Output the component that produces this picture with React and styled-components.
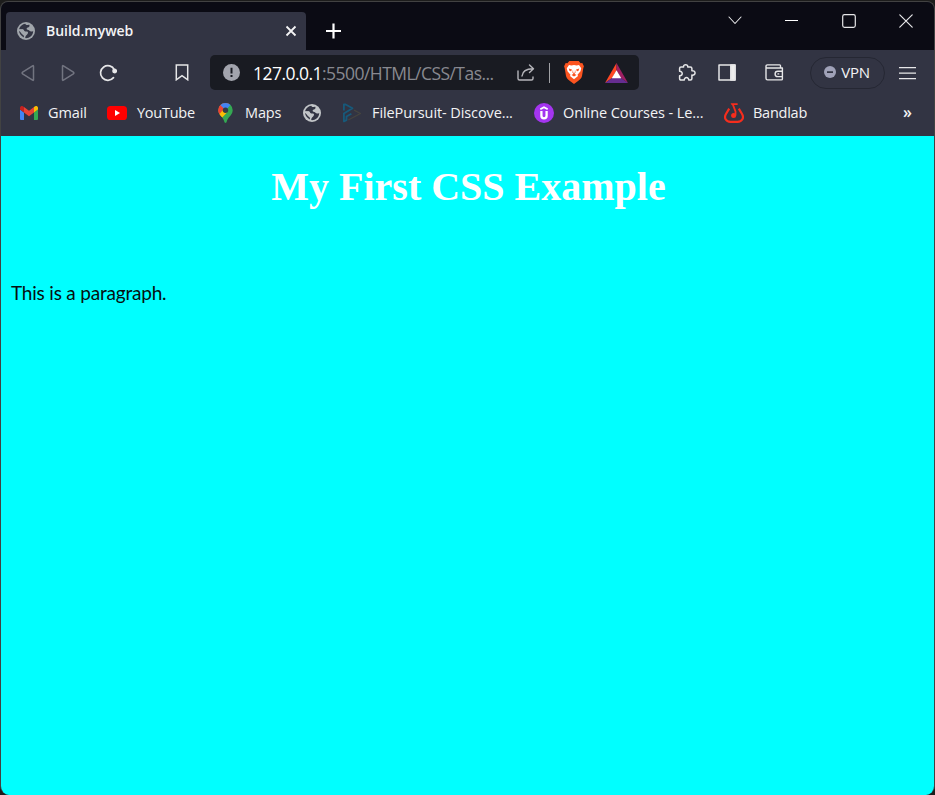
import React from 'react';
import styled, { createGlobalStyle } from 'styled-components';

const GlobalStyle = createGlobalStyle`
  * { box-sizing: border-box; }
  html, body { margin: 0; background: #1b1b1b; overflow: hidden; }
  svg { display: block; flex: none; }
`;

const Desktop = styled.div`
  width: 935px;
  height: 795px;
  padding-top: 1px;
  background: #1d1d1c;
`;

const BrowserWindow = styled.div`
  height: 794px;
  display: flex;
  flex-direction: column;
  overflow: hidden;
  border: 1px solid #424242;
  border-bottom: 0;
  border-radius: 8px 8px 9px 9px;
  background: #323443;
  color: #f3f3f5;
  font-family: "Open Sans", "Noto Sans", sans-serif;
`;

const TabStrip = styled.div`
  height: 48px;
  flex: none;
  display: flex;
  align-items: flex-end;
  padding-left: 5px;
  background: #0b0b14;
`;

const Tab = styled.div`
  width: 300px;
  height: 38px;
  display: flex;
  align-items: center;
  padding: 0 9px 0 11px;
  border-radius: 4px 4px 0 0;
  background: #323443;
`;

const TabTitle = styled.span`
  flex: 1;
  margin-left: 11px;
  font-size: 14px;
  line-height: 20px;
  font-weight: 600;
  letter-spacing: ${(p) => p.$tracking}px;
`;

const NewTab = styled.div`
  width: 54px;
  height: 38px;
  display: grid;
  place-items: center;
`;

const Controls = styled.div`
  height: 48px;
  margin-left: auto;
  padding-bottom: 11px;
  display: grid;
  grid-template-columns: 56px 56px 59px 56px;
  place-items: center;
`;

const Toolbar = styled.div`
  height: 45px;
  flex: none;
  display: grid;
  padding-left: 7px;
  align-items: center;
  grid-template-columns: 40px 40px 40px 26px 56px 429px 28px 40px 40px 54px 6px 80px 41px;
  justify-items: center;
`;

const AddressBar = styled.div`
  width: 429px;
  height: 35px;
  display: grid;
  grid-template-columns: 43px 253px 39px 9px 39px 46px;
  align-items: center;
  justify-items: center;
  border-radius: 5px;
  background: #191b22;
`;

const Address = styled.div`
  justify-self: start;
  font-size: 17.5px;
  line-height: 24px;
  letter-spacing: ${(p) => p.$tracking}px;
  white-space: nowrap;
  color: #888990;
`;

const Host = styled.span`
  color: #ffffff;
`;

const Divider = styled.div`
  width: 1px;
  height: 20px;
  background: #a0a1a5;
`;

const VpnPill = styled.div`
  width: 75px;
  height: 32px;
  display: flex;
  align-items: center;
  justify-content: center;
  gap: 5px;
  border: 1px solid #252733;
  border-radius: 16px;
  font-size: 15px;
  line-height: 20px;
  padding-bottom: 1px;
  letter-spacing: -0.2px;
`;

const Bookmarks = styled.div`
  height: 41px;
  flex: none;
  display: grid;
  align-items: center;
  padding: 0 0 5px 18px;
  grid-template-columns: 88px 108px 87px 40px 192px 190px 172px 40px;
`;

const Bookmark = styled.div`
  display: flex;
  align-items: center;
  gap: ${(p) => p.$gap || 10}px;
`;

const BookmarkIcon = styled.div`
  width: 20px;
  height: 20px;
  display: grid;
  place-items: center;
`;

const Label = styled.span`
  font-size: 14.5px;
  line-height: 20px;
  letter-spacing: ${(p) => p.$tracking ?? -0.13}px;
  white-space: nowrap;
`;

const Overflow = styled.span`
  font-size: 16px;
  line-height: 20px;
  font-weight: 600;
  padding: 0 0 3px 7px;
`;

const Page = styled.main`
  flex: 1;
  padding: 25px 10px;
  background: #00ffff;
`;

const Heading = styled.h1`
  margin: 0;
  padding-left: 2px;
  text-align: center;
  font: bold 40px/52px "Liberation Serif", serif;
  color: #ffffff;
`;

const Paragraph = styled.p`
  margin: 68px 0 0;
  font: 19px/24px Lato, sans-serif;
  letter-spacing: -0.2px;
  color: #071010;
`;

const stroke = { fill: 'none', stroke: '#e6e6e8', strokeWidth: 1.5, strokeLinejoin: 'round', strokeLinecap: 'round' };

const Globe = ({ color = '#a0a5ab', hole = '#323443' }) => (
  <svg width="18" height="18" viewBox="0 0 18 18">
    <circle cx="9" cy="9" r="9" fill={color} />
    <path d="M8.2 1.8C5.5 2.1 3 4.2 2 7.2h3.5c1.6 0 1.5 2.4 3 2.4h1.3c1.7 0 1.5 1.9.1 3.2-.8.7-1.6 1.5-1.7 3.3 3.9.4 8-2.5 8-7.1-1.4.8-3.1.7-4-.5-.7-1-2.6-.3-2.6-1.8s2.2-1 2.7-2.2c.4-.8.2-1.5-.3-2-.5.7-2.2.8-3 .3-.4-.3-.3-.8-.8-1Z" fill={hole} />
    <path d="M1.5 7.4h3.9c1.6 0 1.3 2.6 3.2 2.6h.8c.8 0 .8 1.4-.7 2-1.4.5-1.9 1.2-1.8 2.8C4 14 1.5 11.5 1.5 7.4Z" fill={color} />
    <path d="M2 8.8c.3 3 2.3 5.6 5 6.7 0-1.3-.1-2.3-1.2-2.8C4.4 12 3.6 9.8 2 8.8Z" fill={hole} />
  </svg>
);

const Arrow = ({ forward }) => (
  <svg width="14" height="18" viewBox="0 0 14 18" {...stroke} stroke="#727480">
    <path d={forward ? 'M1.5 2.2v13.6q0 1 .9.4l10-6.3q1-.9 0-1.7l-10-6.4q-.9-.5-.9.4Z' : 'M12.5 2.2v13.6q0 1-.9.4l-10-6.3q-1-.9 0-1.7l10-6.4q.9-.5.9.4Z'} />
  </svg>
);

const Reload = () => (
  <svg width="18" height="18" viewBox="0 0 18 18" {...stroke} strokeWidth="1.7">
    <path d="M14.5 13.6A7.3 7.3 0 1 1 15.4 5.8" />
    <circle cx="15.6" cy="7" r="1.6" fill="#f2f2f2" />
  </svg>
);

const Gmail = () => (
  <svg width="18" height="14" viewBox="0 0 18 14">
    <path d="M0 3.5v9.2c0 .8.5 1.3 1.3 1.3H4V6.5Z" fill="#4285f4" />
    <path d="M14 6.5V14h2.7c.8 0 1.3-.5 1.3-1.3V3.5Z" fill="#34a853" />
    <path d="M14 1v5.5l4-3V2c0-1.8-1.8-2.6-3.2-1.6Z" fill="#fbbc04" />
    <path d="m4 6.5 5 3.8 5-3.8V1L9 4.8 4 1Z" fill="#ea4335" />
    <path d="M0 2v1.5l4 3V1l-.8-.6C1.8-.6 0 .2 0 2Z" fill="#c5221f" />
  </svg>
);

const YouTube = () => (
  <svg width="20" height="14" viewBox="0 0 20 14">
    <rect width="20" height="14" rx="3.6" fill="#ff0000" />
    <path d="m8 4 5 3-5 3Z" fill="#fff" />
  </svg>
);

const Maps = () => (
  <svg width="15" height="20" viewBox="0 0 15 20">
    <defs><clipPath id="pin"><path d="M7.5 0A7.2 7.2 0 0 0 .3 7.2C.3 10 2 12 4 14.3c1.4 1.6 1.8 2.8 2.3 4.5.2.7.6 1.2 1.2 1.2s1-.5 1.2-1.2c.5-1.7.9-2.9 2.3-4.5 2-2.3 3.7-4.3 3.7-7.1A7.2 7.2 0 0 0 7.5 0Z" /></clipPath></defs>
    <g clipPath="url(#pin)">
      <path d="M0 0h15v20H0Z" fill="#34a853" />
      <path d="M0 12 12 0H0Z" fill="#ea4335" />
      <path d="m2 2.5 5.5 5L13.3 1 8-1H4Z" fill="#4285f4" />
      <path d="m0 12 5.5-6.5L9 9.5 3.3 15.6Z" fill="#fbbc04" />
      <path d="m0 2 2-.3 4 4-5.6 6.5L-1 8Z" fill="#ea4335" />
    </g>
    <circle cx="7.5" cy="7.2" r="2.7" fill="#333b47" />
  </svg>
);

const FilePursuit = () => (
  <svg width="20" height="20" viewBox="0 0 20 20" fill="none" strokeLinejoin="round">
    <path d="M12 7.2 18.5 10.5 6.3 17" stroke="#45443f" strokeWidth="1.3" />
    <path d="M1.9 7.5V1.5h1.7L10.5 5.3 1.9 10.6V18.4l2.6-1.3v-3.6l4.9-2.8" stroke="#17597a" strokeWidth="1.8" />
  </svg>
);

const Udemy = () => (
  <svg width="20" height="20" viewBox="0 0 20 20">
    <circle cx="10" cy="10" r="10" fill="#a435f0" />
    <path d="m6.3 6.3 3.7-2 3.7 2" fill="none" stroke="#fff" strokeWidth="1.8" />
    <path d="M7.4 8v4.8c0 3.5 5.2 3.5 5.2 0V8" fill="none" stroke="#fff" strokeWidth="2.3" />
  </svg>
);

const Bandlab = () => (
  <svg width="20" height="20" viewBox="0 0 20 20" fill="none" stroke="#f52d1d" strokeWidth="2.2">
    <path d="M5.2 5.6 2.1 10.7C-.4 14.8 1.9 18.8 6.4 18.8h7.2c4.5 0 6.8-4 4.3-8.1l-3.1-5.1" />
    <path d="M8.7 1.1 11.5 8.3v4.3" strokeWidth="1.8" />
    <circle cx="9.6" cy="12.6" r="2.5" fill="#f52d1d" stroke="none" />
    <path d="M6.6.2h7v1.9h-6Z" fill="#f52d1d" stroke="none" />
  </svg>
);

const Brave = () => (
  <svg width="20" height="23" viewBox="0 0 20 23">
    <path d="M5.3 0h9.4l1.9 2.2 1.7-.2 1.6 3.3-.6 2L18 15.1c-.5 2-1.6 3.3-3.3 4.5L10 23l-4.7-3.4C3.6 18.4 2.5 17 2 15.1L.7 7.3l-.6-2L1.7 2l1.7.2Z" fill="#fb5420" />
    <path d="m5 4 2.4.4L10 4l2.6.4L15 4l2.2 3.2-.7 3.1-3 3.4.5 1.2L10 18.3l-4-3.4.5-1.2-3-3.4-.7-3.1Z" fill="#fff" />
    <path d="m4.7 7.6 3.3.8-.9 1.9-1.5-.2Zm10.6 0-3.3.8.9 1.9 1.5-.2ZM9 8.5l-.6 3 1.1 1.2-2 1.3L10 15.4l2.5-1.4-2-1.3 1.1-1.2-.6-3-.2 3L10 12l-.8-.5Z" fill="#fb5420" />
  </svg>
);

const Bat = () => (
  <svg width="23" height="20" viewBox="0 0 23 20">
    <path d="M11.5 0 0 20l7-5 4.5-7.5Z" fill="#ff4724" />
    <path d="M11.5 0 23 20l-7-5-4.5-7.5Z" fill="#9e1f63" />
    <path d="m0 20 7-5h9l7 5Z" fill="#662d91" />
    <path d="m11.5 7.2-4.8 8.1h9.6Z" fill="#fff" />
  </svg>
);

export default function App() {
  return (
    <Desktop>
      <GlobalStyle />
      <BrowserWindow>
        <TabStrip>
          <Tab>
            <Globe />
            <TabTitle $tracking={-0.02}>Build.myweb</TabTitle>
            <svg width="12" height="12" viewBox="0 0 12 12" fill="none" stroke="#f4f4f5" strokeWidth="1.8"><path d="m1.5 1.5 9 9m0-9-9 9" /></svg>
          </Tab>
          <NewTab>
            <svg width="16" height="16" viewBox="0 0 16 16" fill="none" stroke="#fff" strokeWidth="2.2"><path d="M8.5.5v15M1 8h15" /></svg>
          </NewTab>
          <Controls>
            <svg width="14" height="9" viewBox="0 0 14 9" {...stroke} strokeWidth="1.1"><path d="m1 1 6 6.5L13 1" /></svg>
            <svg width="13" height="3" viewBox="0 0 13 3" fill="#fff"><path d="M0 1h13v1H0Z" /></svg>
            <svg width="14" height="14" viewBox="0 0 14 14" {...stroke} strokeWidth="1.2"><rect x=".7" y=".7" width="12.6" height="12.6" rx="1.8" /></svg>
            <svg width="14" height="14" viewBox="0 0 14 14" {...stroke} strokeWidth="1.2"><path d="m.8.8 12.4 12.4m0-12.4L.8 13.2" /></svg>
          </Controls>
        </TabStrip>
        <Toolbar>
          <Arrow />
          <Arrow forward />
          <Reload />
          <span />
          <svg width="14" height="17" viewBox="0 0 14 17" {...stroke}><path d="M1.3 1h11.4v14.8L7 11.7l-5.7 4.1Z" strokeLinejoin="miter" /></svg>
          <AddressBar>
            <svg width="17" height="17" viewBox="0 0 17 17"><circle cx="8.5" cy="8.5" r="8.5" fill="#a2a4ad" /><path d="M7.5 3.8h2v5.8h-2Zm0 7.1h2v2h-2Z" fill="#191b22" /></svg>
            <Address $tracking={-0.54}><Host>127.0.0.1</Host>:5500/HTML/CSS/Tas...</Address>
            <svg width="18" height="17" viewBox="0 0 18 17" {...stroke} stroke="#b5b5ba" strokeWidth="1.4"><path d="M1 7v7.5Q1 16 2.5 16h12q1.5 0 1.5-1.5V13M5 12c.4-4 3.1-7.3 11-7.3M12.5 1l4 3.7-4 3.7" /></svg>
            <Divider />
            <Brave />
            <Bat />
          </AddressBar>
          <span />
          <svg width="18" height="18" viewBox="0 0 18 18" {...stroke}><path d="M3 3h2.6c-.7-3 4.8-3 4.1 0h2.6q1.6 0 1.6 1.6v2.1c4.2-.5 4.2 4.9 0 4.4v3.4q0 1.5-1.5 1.5h-1.7c.2-3.2-4.6-3.2-4.4 0H3q-1.4 0-1.4-1.5v-2.8c3.5.4 3.5-4.7 0-4.4V4.5Q1.6 3 3 3Z" /></svg>
          <svg width="18" height="17" viewBox="0 0 18 17" {...stroke}><rect x="1" y="1" width="16" height="15" /><path d="M12.8 1H17v15h-4.2Z" fill="#eee" /></svg>
          <svg width="19" height="17" viewBox="0 0 19 17" {...stroke} strokeWidth="1.4"><path d="M15.5 4V1.7q0-.8-.8-.8H2.4Q1 .9 1 2.3v12q0 1.6 1.6 1.6h13.8q1 0 1-1V4H2.3Q1 4 1 2.4M17.4 7.2h-4.6a2.7 2.7 0 0 0 0 5.4h4.6M13 9.9h.7" /></svg>
          <span />
          <VpnPill>
            <svg width="12" height="12" viewBox="0 0 12 12"><circle cx="6" cy="6" r="6" fill="#a0a2b8" /><path d="M3 5.2h6v1.7H3Z" fill="#323443" /></svg>
            <span>VPN</span>
          </VpnPill>
          <svg width="17" height="14" viewBox="0 0 17 14" fill="#e7e7e9"><path d="M0 1h17v1.3H0Zm0 5.5h17v1.3H0ZM0 12h17v1.3H0Z" /></svg>
        </Toolbar>
        <Bookmarks>
          <Bookmark $gap={9}><BookmarkIcon><Gmail /></BookmarkIcon><Label>Gmail</Label></Bookmark>
          <Bookmark><BookmarkIcon><YouTube /></BookmarkIcon><Label $tracking={-0.25}>YouTube</Label></Bookmark>
          <Bookmark><BookmarkIcon><Maps /></BookmarkIcon><Label>Maps</Label></Bookmark>
          <Bookmark><BookmarkIcon><Globe color="#c2c5c8" /></BookmarkIcon></Bookmark>
          <Bookmark><BookmarkIcon><FilePursuit /></BookmarkIcon><Label $tracking={-0.1}>FilePursuit- Discove...</Label></Bookmark>
          <Bookmark $gap={9}><BookmarkIcon><Udemy /></BookmarkIcon><Label $tracking={-0.08}>Online Courses - Le...</Label></Bookmark>
          <Bookmark $gap={9}><BookmarkIcon><Bandlab /></BookmarkIcon><Label $tracking={-0.25}>Bandlab</Label></Bookmark>
          <Overflow>»</Overflow>
        </Bookmarks>
        <Page>
          <Heading>My First CSS Example</Heading>
          <Paragraph>This is a paragraph.</Paragraph>
        </Page>
      </BrowserWindow>
    </Desktop>
  );
}
